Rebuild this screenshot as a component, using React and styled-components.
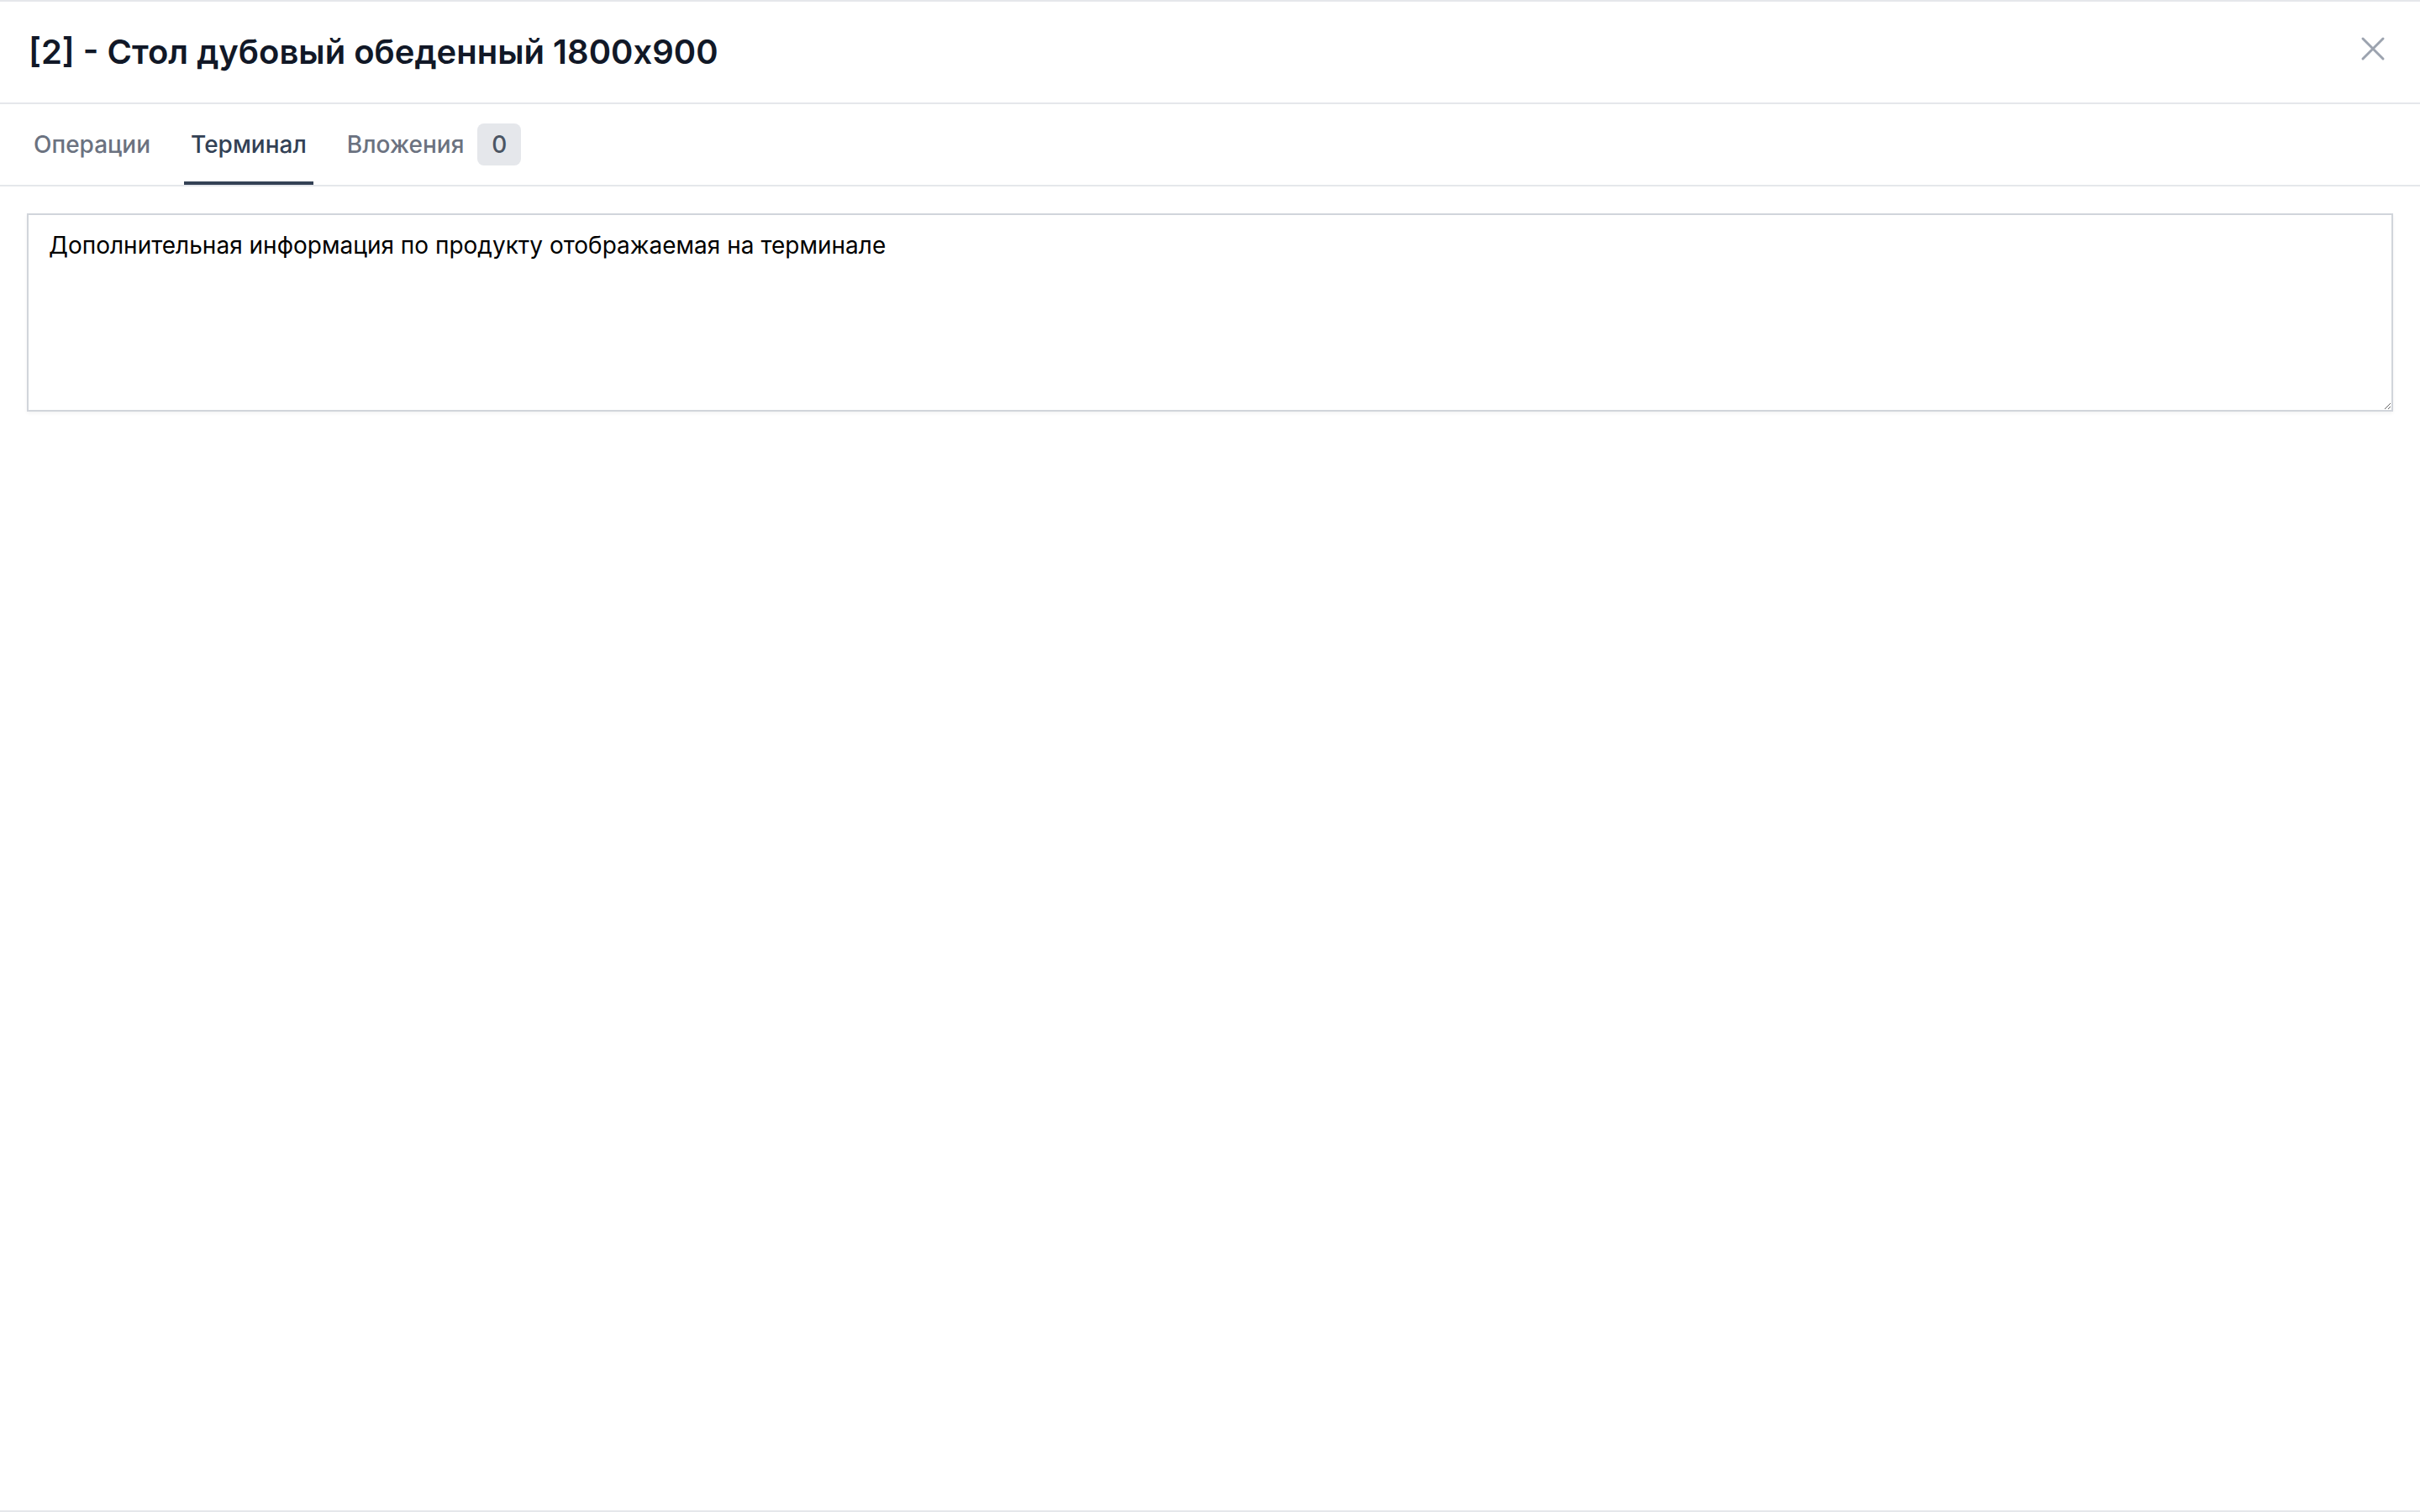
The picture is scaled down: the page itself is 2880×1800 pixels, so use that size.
import React from 'react';
import styled, { createGlobalStyle } from 'styled-components';

const GlobalStyle = createGlobalStyle`
  html, body {
    margin: 0;
    padding: 0;
    background: #ffffff;
  }
  body {
    font-family: Inter, "Noto Sans", "Liberation Sans", sans-serif;
  }
  * {
    box-sizing: border-box;
  }
`;

const Modal = styled.div`
  display: flex;
  flex-direction: column;
  min-height: 100vh;
  background: #ffffff;
  border-top: 2px solid #e5e7eb;
  border-bottom: 2px solid #e5e7eb;
`;

const Header = styled.header`
  display: flex;
  align-items: flex-start;
  justify-content: space-between;
  padding: 32px 32px 32px 34px;
  border-bottom: 2px solid #e5e7eb;
`;

const Title = styled.h2`
  margin: 0;
  font-size: 40px;
  line-height: 56px;
  font-weight: 600;
  color: #111827;
`;

const CloseButton = styled.button`
  display: flex;
  align-items: center;
  justify-content: center;
  width: 48px;
  height: 48px;
  padding: 0;
  border: 0;
  background: transparent;
  color: #9ca3af;
  cursor: pointer;
`;

const TabList = styled.nav`
  display: flex;
  gap: 32px;
  padding: 0 32px;
  border-bottom: 2px solid #e5e7eb;
`;

const Tab = styled.button`
  display: flex;
  align-items: center;
  height: 96px;
  padding: 4px 8px 0;
  border: 0;
  border-bottom: 4px solid ${(p) => (p.$active ? '#334155' : 'transparent')};
  background: transparent;
  font-family: inherit;
  font-size: 28px;
  line-height: 40px;
  font-weight: 500;
  color: ${(p) => (p.$active ? '#334155' : '#6b7280')};
  cursor: pointer;
`;

const Badge = styled.span`
  display: inline-flex;
  align-items: center;
  justify-content: center;
  min-width: 52px;
  height: 50px;
  margin-left: 16px;
  padding: 0 16px;
  border-radius: 8px;
  background: #e5e7eb;
  color: #4b5563;
  font-size: 28px;
  font-weight: 500;
`;

const Body = styled.section`
  padding: 32px;
`;

const Notes = styled.textarea`
  display: block;
  width: 100%;
  height: 236px;
  padding: 16px 24px;
  border: 2px solid #d1d5db;
  border-radius: 0;
  box-shadow: 0 2px 4px rgba(0, 0, 0, 0.05);
  font-family: Inter, "Liberation Sans", sans-serif;
  font-size: 28px;
  line-height: 40px;
  color: #000000;
  resize: vertical;
  outline: none;
`;

const XIcon = () => (
  <svg width="48" height="48" viewBox="0 0 24 24" fill="none" stroke="currentColor" strokeWidth="1.5" strokeLinecap="round">
    <path d="M6 18L18 6M6 6l12 12" />
  </svg>
);

const tabs = [
  { key: 'ops', label: 'Операции' },
  { key: 'terminal', label: 'Терминал' },
  { key: 'files', label: 'Вложения', count: 0 },
];

export default function App() {
  const active = 'terminal';
  return (
    <>
      <GlobalStyle />
      <Modal>
        <Header>
          <Title>[2] - Стол дубовый обеденный 1800x900</Title>
          <CloseButton aria-label="Закрыть">
            <XIcon />
          </CloseButton>
        </Header>
        <TabList>
          {tabs.map((t) => (
            <Tab key={t.key} $active={t.key === active}>
              {t.label}
              {t.count !== undefined && <Badge>{t.count}</Badge>}
            </Tab>
          ))}
        </TabList>
        <Body>
          <Notes defaultValue="Дополнительная информация по продукту отображаемая на терминале" />
        </Body>
      </Modal>
    </>
  );
}
